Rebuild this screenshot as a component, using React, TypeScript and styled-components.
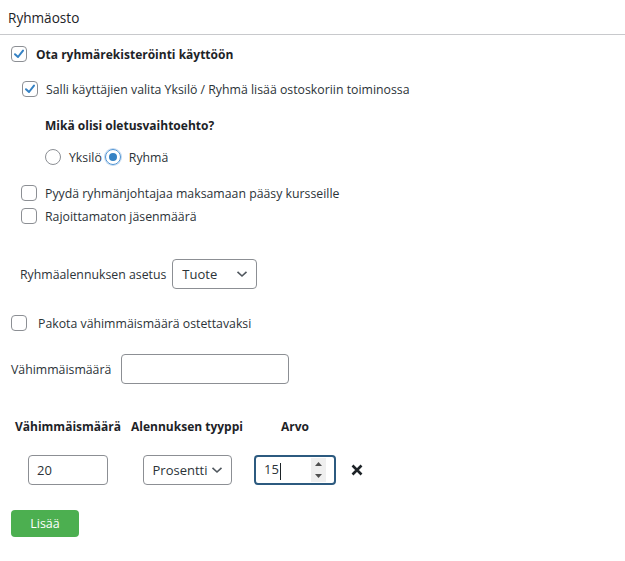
import React from "react";
import styled, { createGlobalStyle } from "styled-components";

const Global = createGlobalStyle`
  html, body {
    margin: 0;
    padding: 0;
    background: #fff;
  }
  body {
    font-family: "Open Sans", "Noto Sans", sans-serif;
    font-size: 12.3px;
    color: #2c3338;
  }
`;

const Page = styled.div`
  width: 625px;
  height: 561px;
  background: #fff;
  overflow: hidden;
`;

const Header = styled.div`
  height: 34px;
  display: flex;
  align-items: center;
  padding-left: 8px;
  border-bottom: 1px solid #c8c9cc;
  font-size: 13.6px;
  color: #1d2327;
`;

const Row = styled.div<{ $indent: number; $top: number; $h?: number; $gap?: number }>`
  display: flex;
  align-items: center;
  height: ${(p) => p.$h ?? 20}px;
  margin-top: ${(p) => p.$top}px;
  padding-left: ${(p) => p.$indent}px;
  gap: ${(p) => p.$gap ?? 8}px;
`;

const Label = styled.span<{ $bold?: boolean }>`
  font-weight: ${(p) => (p.$bold ? 700 : 400)};
  font-size: ${(p) => (p.$bold ? "12px" : "12.3px")};
  color: ${(p) => (p.$bold ? "#1d2327" : "#2c3338")};
  white-space: nowrap;
`;

const Box = styled.span`
  width: 14px;
  height: 14px;
  flex: none;
  border: 1px solid #8c8f94;
  border-radius: 4px;
  display: inline-flex;
  align-items: center;
  justify-content: center;
  background: #fff;
`;

const Radio = styled.span<{ $checked?: boolean }>`
  width: 14px;
  height: 14px;
  flex: none;
  border-radius: 50%;
  border: 1px solid ${(p) => (p.$checked ? "#4f94d4" : "#8c8f94")};
  box-shadow: ${(p) => (p.$checked ? "0 0 0 1px #c5daf0" : "none")};
  display: inline-flex;
  align-items: center;
  justify-content: center;
  &::after {
    content: "";
    display: ${(p) => (p.$checked ? "block" : "none")};
    width: 8px;
    height: 8px;
    border-radius: 50%;
    background: #3582c4;
  }
`;

const RadioGroup = styled.div`
  display: flex;
  align-items: center;
  gap: 8px;
`;

const Select = styled.div<{ $w: number }>`
  width: ${(p) => p.$w}px;
  height: 30px;
  box-sizing: border-box;
  border: 1px solid #8c8f94;
  border-radius: 4px;
  display: flex;
  align-items: center;
  justify-content: space-between;
  padding: 0 8px 0 9px;
  font-size: 13px;
  color: #2c3338;
  background: #fff;
`;

const TextInput = styled.div<{ $w: number }>`
  width: ${(p) => p.$w}px;
  height: 30px;
  box-sizing: border-box;
  border: 1px solid #8c8f94;
  border-radius: 4px;
  display: flex;
  align-items: center;
  padding-left: 8px;
  font-size: 13px;
  color: #2c3338;
  background: #fff;
`;

const NumberInput = styled.div`
  width: 82px;
  height: 30px;
  box-sizing: border-box;
  border: 2px solid #2c5a7f;
  border-radius: 4px;
  display: flex;
  align-items: center;
  justify-content: space-between;
  padding-left: 8px;
  padding-right: 8px;
  font-size: 13px;
  color: #2c3338;
`;

const Caret = styled.span`
  display: inline-block;
  width: 1px;
  height: 17px;
  background: #1d2327;
  margin-left: 1px;
  vertical-align: middle;
`;

const Spin = styled.span`
  width: 15px;
  height: 24px;
  background: #efefef;
  display: flex;
  flex-direction: column;
  align-items: center;
  justify-content: space-around;
`;

const Grid = styled.div<{ $top: number; $h: number }>`
  display: grid;
  grid-template-columns: 114px 124px 92px 32px;
  margin-top: ${(p) => p.$top}px;
  margin-left: 11px;
  height: ${(p) => p.$h}px;
  align-items: center;
  justify-items: center;
`;

const Th = styled.span`
  font-weight: 700;
  font-size: 12px;
  color: #1d2327;
  white-space: nowrap;
`;

const Button = styled.button`
  margin: 25px 0 0 11px;
  width: 68px;
  height: 27px;
  border: none;
  border-radius: 4px;
  background: #4caf50;
  color: #fff;
  font: 400 12.5px "Open Sans", "Noto Sans", sans-serif;
  padding: 0;
`;

const Check = () => (
  <svg width="14" height="14" viewBox="0 0 14 14">
    <path d="M3 7.2 L6 10 L11 3.6" fill="none" stroke="#3582c4" strokeWidth="2" strokeLinecap="round" strokeLinejoin="round" />
  </svg>
);

const Chevron = () => (
  <svg width="12" height="8" viewBox="0 0 12 8">
    <path d="M1.5 1.8 L6 6 L10.5 1.8" fill="none" stroke="#50575e" strokeWidth="1.6" />
  </svg>
);

const Arrows = () => (
  <Spin>
    <svg width="7" height="4" viewBox="0 0 7 4"><path d="M0 4 L3.5 0 L7 4Z" fill="#505050" /></svg>
    <svg width="7" height="4" viewBox="0 0 7 4"><path d="M0 0 L3.5 4 L7 0Z" fill="#505050" /></svg>
  </Spin>
);

const Remove = () => (
  <svg width="12" height="12" viewBox="0 0 12 12">
    <path d="M1.5 1.5 L10.5 10.5 M10.5 1.5 L1.5 10.5" stroke="#1d2327" strokeWidth="2.6" />
  </svg>
);

export default function App() {
  return (
    <Page>
      <Global />
      <Header>Ryhmäosto</Header>

      <Row $indent={11} $top={9} $gap={9}>
        <Box><Check /></Box>
        <Label $bold>Ota ryhmärekisteröinti käyttöön</Label>
      </Row>
      <Row $indent={22} $top={15}>
        <Box><Check /></Box>
        <Label>Salli käyttäjien valita Yksilö / Ryhmä lisää ostoskoriin toiminossa</Label>
      </Row>
      <Row $indent={45} $top={16}>
        <Label $bold>Mikä olisi oletusvaihtoehto?</Label>
      </Row>
      <Row $indent={45} $top={12} $gap={3}>
        <RadioGroup>
          <Radio />
          <Label>Yksilö</Label>
        </RadioGroup>
        <RadioGroup>
          <Radio $checked />
          <Label>Ryhmä</Label>
        </RadioGroup>
      </Row>
      <Row $indent={21} $top={16}>
        <Box />
        <Label>Pyydä ryhmänjohtajaa maksamaan pääsy kursseille</Label>
      </Row>
      <Row $indent={21} $top={3}>
        <Box />
        <Label>Rajoittamaton jäsenmäärä</Label>
      </Row>

      <Row $indent={20} $top={33} $h={30} $gap={6}>
        <Label>Ryhmäalennuksen asetus</Label>
        <Select $w={85}>
          <span>Tuote</span>
          <Chevron />
        </Select>
      </Row>

      <Row $indent={11} $top={24} $gap={11}>
        <Box />
        <Label>Pakota vähimmäismäärä ostettavaksi</Label>
      </Row>

      <Row $indent={11} $top={21} $h={30} $gap={10}>
        <Label>Vähimmäismäärä</Label>
        <TextInput $w={168} />
      </Row>

      <Grid $top={32} $h={20}>
        <Th>Vähimmäismäärä</Th>
        <Th>Alennuksen tyyppi</Th>
        <Th>Arvo</Th>
        <span />
      </Grid>
      <Grid $top={19} $h={30}>
        <TextInput $w={80}>20</TextInput>
        <Select $w={89}>
          <span>Prosentti</span>
          <Chevron />
        </Select>
        <NumberInput>
          <span>15<Caret /></span>
          <Arrows />
        </NumberInput>
        <Remove />
      </Grid>

      <Button>Lisää</Button>
    </Page>
  );
}
